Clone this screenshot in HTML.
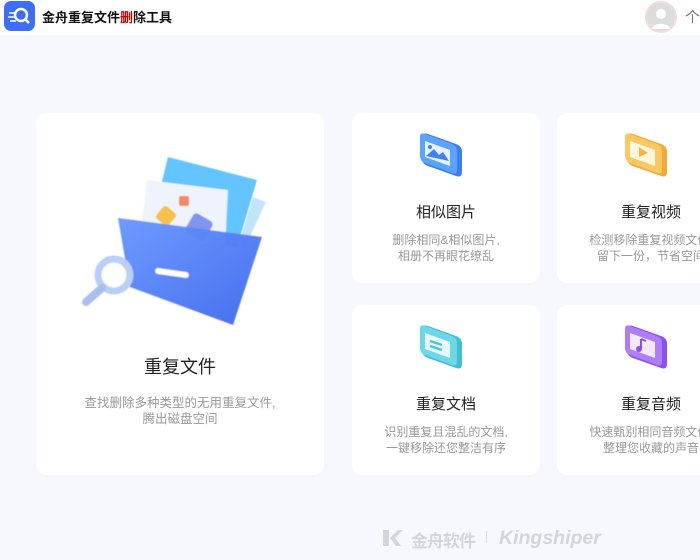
<!DOCTYPE html>
<html><head><meta charset="utf-8"><style>
*{margin:0;padding:0;box-sizing:border-box}
body{width:700px;height:560px;overflow:hidden;background:#f7f8fd;font-family:"Liberation Sans","Noto Sans CJK SC",sans-serif;position:relative}
.hd{position:absolute;left:0;top:0;width:700px;height:35px;background:#fff}
.logo{position:absolute;left:4px;top:1px;width:31px;height:30px;border-radius:7px;background:#3e6ef5}
.ttl{position:absolute;left:42px;top:7px;font-size:13px;font-weight:bold;color:#111}
.av{position:absolute;left:645px;top:1px;width:32px;height:32px;border-radius:50%;background:#ddd;border:2px solid #f6d9dc}
.card{position:absolute;background:#fff;border-radius:10px}
.t{position:absolute;left:0;right:0;text-align:center;color:#222}
.d{position:absolute;left:0;right:0;text-align:center;color:#999;white-space:nowrap}
.sc .t{top:88px;font-size:15px}
.sc .d{top:119px;font-size:12px;line-height:16px}
.ic{position:absolute;left:67px;top:17px}
.wm{position:absolute;top:527px;color:#d4d5da;font-size:18px}
</style></head><body>
<div class="hd">
<div class="logo"><svg width="31" height="30"><path d="M5 12h6M4 16h7M6 20h6" stroke="#cdd9ff" stroke-width="2"/><circle cx="17" cy="14" r="6" fill="none" stroke="#fff" stroke-width="2.5"/><path d="M21 18l4 4" stroke="#fff" stroke-width="2.5"/></svg></div>
<div class="ttl">金舟重复文件<span style="color:#c00">删</span>除工具</div>
<div class="av"><svg width="28" height="28"><circle cx="14" cy="11" r="5" fill="#fff"/><path d="M5 26c1-7 17-7 18 0z" fill="#fff"/></svg></div>
<div style="position:absolute;left:685px;top:6px;color:#777;font-size:15px">个</div>
</div>

<div class="card" style="left:36px;top:113px;width:288px;height:362px">
<div class="t" style="top:240px;font-size:18px">重复文件</div>
<div class="d" style="top:282px;font-size:12.5px;line-height:16px">查找删除多种类型的无用重复文件,<br>腾出磁盘空间</div>
</div>
<svg style="position:absolute;left:0;top:0" width="330" height="340">
<defs><linearGradient id="g1" x1="0" y1="0" x2="1" y2="1"><stop offset="0" stop-color="#6a96ff"/><stop offset="1" stop-color="#3e69ee"/></linearGradient>
<filter id="bl"><feGaussianBlur stdDeviation="0.6"/></filter></defs>
<g filter="url(#bl)">
<path d="M168 157L257 180L237 247L150 230z" fill="#63c4ff"/>
<path d="M253 197L266 202L246 245L240 240z" fill="#c3e4ff"/>
<path d="M147 180L228 190L225 250L140 240z" fill="#eef3fd"/>
<rect x="158" y="208" width="16" height="16" rx="3" transform="rotate(40 166 216)" fill="#f7c14a"/>
<rect x="179" y="196" width="10" height="10" rx="2" fill="#f58b5b"/>
<rect x="188" y="216" width="22" height="22" rx="4" transform="rotate(30 199 227)" fill="#7f95f0"/>
<path d="M118 218L262 237L233 325L130 287z" fill="url(#g1)" opacity=".96"/>
<rect x="155" y="270" width="34" height="6" rx="3" fill="#fff" transform="rotate(8 172 273)"/>
<circle cx="114" cy="275" r="16" fill="none" stroke="#b9cff8" stroke-width="7"/>
<path d="M102 288l-16 14" stroke="#a8c0f0" stroke-width="8" stroke-linecap="round"/>
</g>
</svg>

<div class="card sc" style="left:352px;top:113px;width:188px;height:170px">
<svg class="ic" width="50" height="50"><path d="M3 8q0-6 6-4l28 10q6 2 6 8v20q0 6-6 4L9 36q-6-2-6-8z" fill="#3c7df5"/><path d="M1 7q0-5 5-3l27 10q5 2 5 7v19q0 5-5 3L6 33q-5-2-5-7z" fill="#5aa4ff"/><path d="M6 11l25 9v16L6 27z" fill="#e8f2ff"/><circle cx="11" cy="17" r="2" fill="#3d83f5"/><path d="M7 26l8-7 5 6 4-3 6 9z" fill="#3d83f5"/></svg>
<div class="t">相似图片</div>
<div class="d">删除相同&amp;相似图片,<br>相册不再眼花缭乱</div>
</div>
<div class="card sc" style="left:557px;top:113px;width:188px;height:170px">
<svg class="ic" width="50" height="50"><path d="M3 8q0-6 6-4l28 10q6 2 6 8v20q0 6-6 4L9 36q-6-2-6-8z" fill="#f2a83a"/><path d="M1 7q0-5 5-3l27 10q5 2 5 7v19q0 5-5 3L6 33q-5-2-5-7z" fill="#fcc860"/><path d="M6 11l25 9v16L6 27z" fill="#fff6df"/><path d="M15 17l9 6-9 4z" fill="#f7b640"/></svg>
<div class="t">重复视频</div>
<div class="d">检测移除重复视频文件,<br>留下一份，节省空间</div>
</div>
<div class="card sc" style="left:352px;top:305px;width:188px;height:170px">
<svg class="ic" width="50" height="50"><path d="M3 8q0-6 6-4l28 10q6 2 6 8v20q0 6-6 4L9 36q-6-2-6-8z" fill="#3fbfd6"/><path d="M1 7q0-5 5-3l27 10q5 2 5 7v19q0 5-5 3L6 33q-5-2-5-7z" fill="#6fd6e8"/><path d="M6 11l25 9v16L6 27z" fill="#e6f8fc"/><path d="M11 19l12 4M11 24l12 4" stroke="#4cc3da" stroke-width="2.5"/></svg>
<div class="t">重复文档</div>
<div class="d">识别重复且混乱的文档,<br>一键移除还您整洁有序</div>
</div>
<div class="card sc" style="left:557px;top:305px;width:188px;height:170px">
<svg class="ic" width="50" height="50"><path d="M3 8q0-6 6-4l28 10q6 2 6 8v20q0 6-6 4L9 36q-6-2-6-8z" fill="#8c4ff0"/><path d="M1 7q0-5 5-3l27 10q5 2 5 7v19q0 5-5 3L6 33q-5-2-5-7z" fill="#b07df8"/><path d="M6 11l25 9v16L6 27z" fill="#f3e9ff"/><path d="M17 17v10M17 17l5 2" stroke="#8e4ff0" stroke-width="2"/><circle cx="15" cy="27" r="3" fill="#8e4ff0"/></svg>
<div class="t">重复音频</div>
<div class="d">快速甄别相同音频文件,<br>整理您收藏的声音</div>
</div>

<svg style="position:absolute;left:382px;top:529px" width="22" height="18"><path d="M1 1h6v16H1zM8 9l8-8h5l-8 8 6 8h-5z" fill="#d4d5da"/></svg>
<div class="wm" style="left:411px;font-size:17px;font-weight:bold;letter-spacing:-1px">金舟软件</div>
<div style="position:absolute;left:486px;top:531px;width:1px;height:12px;background:#dcdde2"></div>
<div class="wm" style="left:499px;font-weight:bold;font-style:italic;font-size:19.5px">Kingshiper</div>
</body></html>
